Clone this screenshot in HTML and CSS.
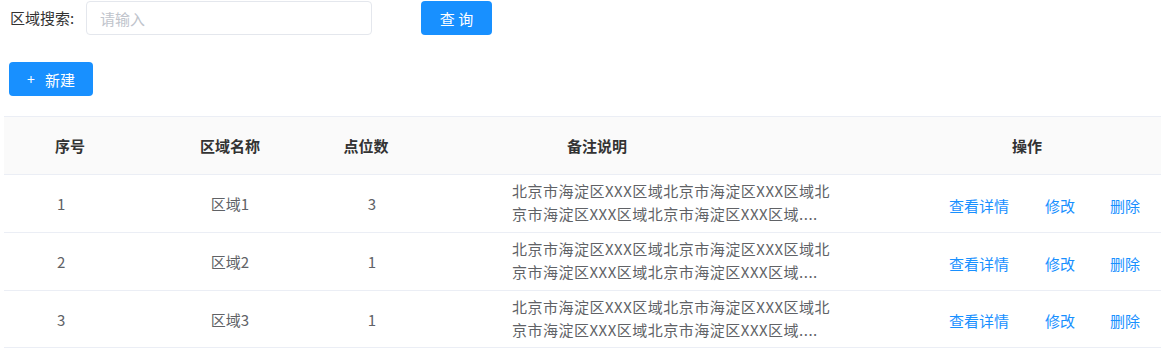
FILE: index.html
```html
<!DOCTYPE html>
<html lang="zh-CN">
<head>
<meta charset="utf-8">
<title>区域管理</title>
<link rel="stylesheet" href="styles.css">
</head>
<body>
<div class="page">
  <div class="search-row">
    <label class="search-label" for="q">区域搜索:</label>
    <input id="q" class="search-input" type="text" placeholder="请输入">
    <button class="btn btn-query">查 询</button>
  </div>
  <div class="action-row">
    <button class="btn btn-new"><span class="plus">+</span>新建</button>
  </div>
  <div class="table">
    <div class="tr thead">
      <div class="c1 th">序号</div>
      <div class="c2 th">区域名称</div>
      <div class="c3 th">点位数</div>
      <div class="c4 th">备注说明</div>
      <div class="c5 th">操作</div>
    </div>
    <div class="tr">
      <div class="c1 td">1</div>
      <div class="c2 td">区域1</div>
      <div class="c3 td">3</div>
      <div class="c4 td"><span class="line">北京市海淀区XXX区域北京市海淀区XXX区域北</span><span class="line">京市海淀区XXX区域北京市海淀区XXX区域....</span></div>
      <div class="c5 td ops"><a class="op op-view">查看详情</a><a class="op op-edit">修改</a><a class="op op-del">删除</a></div>
    </div>
    <div class="tr">
      <div class="c1 td">2</div>
      <div class="c2 td">区域2</div>
      <div class="c3 td">1</div>
      <div class="c4 td"><span class="line">北京市海淀区XXX区域北京市海淀区XXX区域北</span><span class="line">京市海淀区XXX区域北京市海淀区XXX区域....</span></div>
      <div class="c5 td ops"><a class="op op-view">查看详情</a><a class="op op-edit">修改</a><a class="op op-del">删除</a></div>
    </div>
    <div class="tr">
      <div class="c1 td">3</div>
      <div class="c2 td">区域3</div>
      <div class="c3 td">1</div>
      <div class="c4 td"><span class="line">北京市海淀区XXX区域北京市海淀区XXX区域北</span><span class="line">京市海淀区XXX区域北京市海淀区XXX区域....</span></div>
      <div class="c5 td ops"><a class="op op-view">查看详情</a><a class="op op-edit">修改</a><a class="op op-del">删除</a></div>
    </div>
  </div>
</div>
</body>
</html>
```

FILE: styles.css
```css
* { box-sizing: border-box; }
html, body {
  margin: 0;
  background: #fff;
  font-family: "Noto Sans CJK SC", "Noto Sans", sans-serif;
  font-size: 15px;
  color: #606266;
}
.page {
  padding: 1px 0 0 4px;
  overflow: hidden;
}
.search-row {
  display: flex;
  align-items: center;
  height: 34px;
  padding-left: 6px;
}
.search-label {
  width: 76px;
  color: #333;
  font-size: 15px;
  line-height: 34px;
}
.search-input {
  width: 286px;
  height: 34px;
  border: 1px solid #e4e7ed;
  border-radius: 4px;
  padding: 0 13px;
  font: inherit;
  font-size: 15px;
  color: #606266;
  outline: none;
}
.search-input::placeholder { color: #c0c4cc; }
.btn {
  height: 34px;
  border: none;
  border-radius: 4px;
  background: #1890ff;
  color: #fff;
  font-family: inherit;
  font-size: 15px;
  padding: 0;
  cursor: pointer;
}
.btn-query {
  margin-left: 49px;
  width: 71px;
}
.action-row {
  margin-top: 27px;
  padding-left: 5px;
}
.btn-new {
  width: 84px;
  display: flex;
  align-items: center;
  justify-content: center;
}
.plus {
  font-size: 14px;
  margin-right: 10px;
}
.table {
  margin-top: 20px;
  border-top: 1px solid #ebeef5;
}
.tr {
  display: grid;
  grid-template-columns: 132px 188px 84px 526px 1fr;
  height: 58px;
  border-bottom: 1px solid #ebeef5;
  align-items: center;
}
.tr:last-child { height: 57px; }
.thead {
  background: #fafafa;
  height: 58px;
}
.th {
  font-weight: bold;
  color: #333;
  text-align: center;
}
.thead .c4 { text-align: left; padding-left: 159px; }
.thead .c5 { padding-right: 41px; }
.td { color: #606266; }
.tr .td.c1 { padding-left: 53px; }
.tr .td.c2 { text-align: center; }
.tr .td.c3 { text-align: center; padding-left: 12px; }
.tr .td.c4 {
  padding-left: 104px;
  line-height: 23px;
  margin-top: -3px;
}
.line {
  display: block;
  white-space: nowrap;
  letter-spacing: 0.5px;
}
.ops {
  display: flex;
  padding-left: 15px;
  margin-top: 3px;
}
.op {
  color: #1890ff;
  cursor: pointer;
  text-decoration: none;
}
.op-edit { margin-left: 36px; }
.op-del { margin-left: 35px; }
```
